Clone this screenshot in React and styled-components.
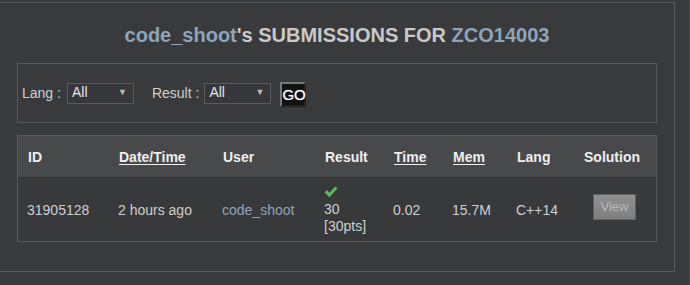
import styled, { createGlobalStyle } from "styled-components";

const GlobalStyle = createGlobalStyle`
    html, body {
        margin: 0;
        padding: 0;
        background: #393a3c;
        font-family: "Liberation Sans", Arial, sans-serif;
    }
`;

const columns = "91px 104px 102px 69px 59px 64px 67px 84px";

const headers = [
    { label: "ID" },
    { label: "Date/Time", sort: true },
    { label: "User" },
    { label: "Result" },
    { label: "Time", sort: true },
    { label: "Mem", sort: true },
    { label: "Lang" },
    { label: "Solution" },
];

function Check() {
    return (
        <svg width="14" height="12" viewBox="0 0 14 12">
            <path
                d="M0.6 6.4 L3.2 4.2 L5.4 6.8 L11.2 0.4 L13.4 2.4 L5.4 11.2 Z"
                fill="#5cb85c"
            />
        </svg>
    );
}

function Select() {
    return (
        <Styled.Select>
            <span>All</span>
            <span className="arrow">▼</span>
        </Styled.Select>
    );
}

function App() {
    return (
        <>
            <GlobalStyle />
            <Styled.Page>
                <Styled.Panel>
                    <Styled.Title>
                        <span className="hl">code_shoot</span>'s SUBMISSIONS FOR{" "}
                        <span className="hl">ZCO14003</span>
                    </Styled.Title>

                    <Styled.Filter>
                        <Styled.Label>Lang :</Styled.Label>
                        <Select />
                        <Styled.Label className="second">Result :</Styled.Label>
                        <Select />
                        <Styled.Go>GO</Styled.Go>
                    </Styled.Filter>

                    <Styled.Table>
                        <Styled.HeadRow>
                            {headers.map((h) => (
                                <Styled.HeadCell key={h.label} $sort={h.sort}>
                                    {h.label}
                                </Styled.HeadCell>
                            ))}
                        </Styled.HeadRow>
                        <Styled.Row>
                            <Styled.Cell>31905128</Styled.Cell>
                            <Styled.Cell>2 hours ago</Styled.Cell>
                            <Styled.Cell $link>code_shoot</Styled.Cell>
                            <Styled.Cell>
                                <Styled.Result>
                                    <Check />
                                    <span>30</span>
                                    <span>[30pts]</span>
                                </Styled.Result>
                            </Styled.Cell>
                            <Styled.Cell>0.02</Styled.Cell>
                            <Styled.Cell>15.7M</Styled.Cell>
                            <Styled.Cell>C++14</Styled.Cell>
                            <Styled.Cell $button>
                                <Styled.View>View</Styled.View>
                            </Styled.Cell>
                        </Styled.Row>
                    </Styled.Table>
                </Styled.Panel>
            </Styled.Page>
        </>
    );
}

export default App;

const Styled = {
    Page: styled.div`
        width: 690px;
        height: 285px;
        overflow: hidden;
        padding-top: 2px;
        box-sizing: border-box;
        border-right: 1px solid #4a4b4d;
    `,
    Panel: styled.div`
        margin-left: -1px;
        width: 676px;
        height: 270px;
        box-sizing: border-box;
        border: 1px solid #58595b;
        background: #393a3c;
        padding: 20px 17px 0 17px;
    `,
    Title: styled.h2`
        margin: 0 0 16px;
        text-align: center;
        font-size: 20px;
        line-height: 24px;
        font-weight: bold;
        color: #c9c9c9;

        .hl {
            color: #8fa4b9;
        }
    `,
    Filter: styled.div`
        height: 58px;
        border: 1px solid #58595b;
        display: flex;
        align-items: center;
        padding: 0 0 0 4px;
        margin-bottom: 12px;
    `,
    Label: styled.span`
        font-size: 14px;
        color: #cfcfcf;
        margin-right: 6px;

        &.second {
            margin-left: 18px;
            margin-right: 5px;
        }
    `,
    Select: styled.div`
        width: 67px;
        height: 21px;
        box-sizing: border-box;
        border: 1px solid #5a5b5d;
        background: #36373a;
        display: flex;
        align-items: center;
        justify-content: space-between;
        padding: 0 6px 2px 4px;
        font-size: 14px;
        color: #e6e6e6;

        .arrow {
            font-size: 9px;
            color: #bbb;
        }
    `,
    Go: styled.button`
        margin-left: 9px;
        margin-top: 3px;
        width: 26px;
        height: 25px;
        padding: 0;
        box-sizing: border-box;
        background: #111;
        border: 2px outset #777;
        color: #fff;
        font-family: "Liberation Sans", Arial, sans-serif;
        font-size: 15px;
        text-shadow: 0 0 1px #9ab;
    `,
    Table: styled.div`
        border: 1px solid #58595b;
    `,
    HeadRow: styled.div`
        display: grid;
        grid-template-columns: ${columns};
        height: 41px;
        align-items: center;
        background: #48494b;
        border-bottom: 1px solid #333436;
    `,
    HeadCell: styled.div`
        padding-left: 10px;
        font-size: 14px;
        font-weight: bold;
        color: #efefef;
        text-decoration: ${(p) => (p.$sort ? "underline" : "none")};
        text-underline-offset: 2px;
    `,
    Row: styled.div`
        display: grid;
        grid-template-columns: ${columns};
        height: 63px;
        align-items: center;
        background: #38393b;
    `,
    Cell: styled.div`
        padding-left: ${(p) => (p.$button ? "19px" : "9px")};
        padding-bottom: ${(p) => (p.$button ? "6px" : "0")};
        font-size: 14px;
        color: ${(p) => (p.$link ? "#8fa4b9" : "#cfcfcf")};
        display: flex;
    `,
    Result: styled.div`
        display: flex;
        flex-direction: column;
        line-height: 17px;
        padding-top: 2px;

        svg {
            margin: 0 0 3px 0;
        }
    `,
    View: styled.button`
        width: 43px;
        height: 26px;
        padding: 0;
        border: 1px solid #5f6062;
        background: linear-gradient(#8f8f8f, #7f7f7f);
        color: #b9b9b9;
        font-family: "Liberation Sans", Arial, sans-serif;
        font-size: 13px;
    `,
};
